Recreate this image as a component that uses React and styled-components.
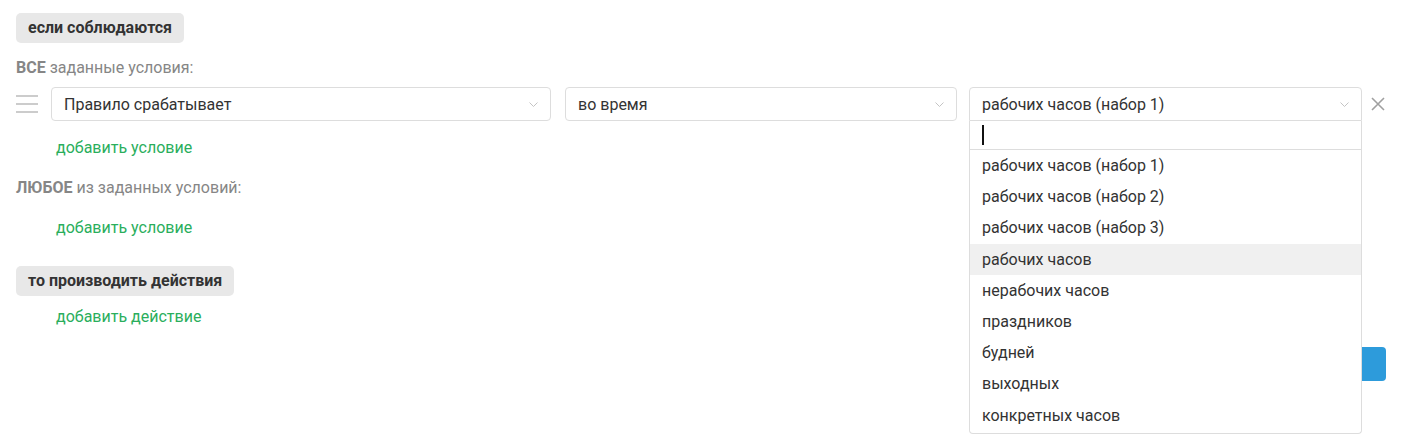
import styled, { createGlobalStyle } from 'styled-components'

const GlobalStyle = createGlobalStyle`
  html, body {
    margin: 0;
    min-height: 100%;
    background: #ffffff;
    font-family: Roboto, "Noto Sans", Arial, sans-serif;
  }
`

const Container = styled.div`
  box-sizing: border-box;
  width: 1402px;
  min-height: 448px;
  padding: 13px 16px;
  display: flex;
  flex-direction: column;
  align-items: flex-start;
`

const Badge = styled.div`
  height: 30px;
  line-height: 30px;
  padding: 0 12px;
  border-radius: 5px;
  background: #e8e8e8;
  color: #333333;
  font-weight: 700;
  font-size: 16px;
  margin-top: ${(props) => props.top || 0}px;
`

const Label = styled.div`
  font-size: 16px;
  line-height: 20px;
  color: #868686;
  margin-top: ${(props) => props.top || 0}px;

  b {
    font-weight: 700;
  }
`

const AddLink = styled.a`
  display: block;
  font-size: 16px;
  line-height: 20px;
  color: #2aae5c;
  text-decoration: none;
  margin-left: 40px;
  margin-top: ${(props) => props.top || 0}px;
  cursor: pointer;
`

const ConditionRow = styled.div`
  display: flex;
  align-items: center;
  margin-top: 9px;
`

const Handle = styled.div`
  width: 22px;
  height: 18px;
  display: flex;
  flex-direction: column;
  justify-content: space-between;
  margin-right: 13px;

  span {
    height: 2px;
    background: #cccccc;
  }
`

const SelectWrap = styled.div`
  position: relative;
  width: ${(props) => props.width}px;
  margin-right: ${(props) => props.gap || 0}px;
`

const SelectBox = styled.div`
  box-sizing: border-box;
  height: 34px;
  display: flex;
  align-items: center;
  justify-content: space-between;
  padding: 0 12px;
  border: 1px solid #dddddd;
  border-radius: ${(props) => (props.open ? '4px 4px 0 0' : '4px')};
  font-size: 16px;
  color: #333333;
  background: #ffffff;
`

const Dropdown = styled.div`
  position: absolute;
  top: 100%;
  left: 0;
  right: 0;
  z-index: 10;
  background: #ffffff;
  border: 1px solid #dddddd;
  border-top: none;
  border-radius: 0 0 4px 4px;
  padding-bottom: 2px;
`

const Search = styled.div`
  height: 28px;
  display: flex;
  align-items: center;
  padding: 0 12px;
  border-bottom: 1px solid #dddddd;
`

const Caret = styled.span`
  width: 1.5px;
  height: 20px;
  background: #111111;
`

const Option = styled.div`
  height: 31.2px;
  line-height: 31px;
  padding: 0 12px;
  font-size: 16px;
  color: #333333;
  background: ${(props) => (props.active ? '#f0f0f0' : '#ffffff')};
`

const RemoveButton = styled.button`
  width: 15px;
  height: 15px;
  margin-left: 8px;
  padding: 0;
  border: none;
  background: none;
  display: flex;
  align-items: center;
  justify-content: center;
`

const Footer = styled.div`
  width: 100%;
  display: flex;
  justify-content: flex-end;
  margin-top: 20px;
`

const SaveButton = styled.button`
  height: 34px;
  padding: 0 28px;
  border: none;
  border-radius: 4px;
  background: #2d9bdb;
  color: #ffffff;
  font-family: inherit;
  font-size: 16px;
`

const Chevron = () => (
  <svg width='9' height='5' viewBox='0 0 9 5'>
    <polyline points='0.5,0.5 4.5,4.5 8.5,0.5' fill='none' stroke='#c4c4c4' strokeWidth='1' />
  </svg>
)

const Select = ({ value, width, gap, open, children }) => (
  <SelectWrap width={width} gap={gap}>
    <SelectBox open={open}>
      <span>{value}</span>
      <Chevron />
    </SelectBox>
    {open && children}
  </SelectWrap>
)

const periods = [
  'рабочих часов (набор 1)',
  'рабочих часов (набор 2)',
  'рабочих часов (набор 3)',
  'рабочих часов',
  'нерабочих часов',
  'праздников',
  'будней',
  'выходных',
  'конкретных часов',
]

const App = () => {
  return (
    <Container>
      <GlobalStyle />
      <Badge>если соблюдаются</Badge>
      <Label top={15}>
        <b>ВСЕ</b> заданные условия:
      </Label>
      <ConditionRow>
        <Handle>
          <span />
          <span />
          <span />
        </Handle>
        <Select value='Правило срабатывает' width={500} gap={14} />
        <Select value='во время' width={392} gap={12} />
        <Select value='рабочих часов (набор 1)' width={393} open>
          <Dropdown>
            <Search>
              <Caret />
            </Search>
            {periods.map((p, i) => (
              <Option key={p} active={i === 3}>
                {p}
              </Option>
            ))}
          </Dropdown>
        </Select>
        <RemoveButton>
          <svg width='14' height='14' viewBox='0 0 14 14'>
            <path d='M1 1L13 13M13 1L1 13' stroke='#a0a0a0' strokeWidth='1.6' />
          </svg>
        </RemoveButton>
      </ConditionRow>
      <AddLink top={17}>добавить условие</AddLink>
      <Label top={20}>
        <b>ЛЮБОЕ</b> из заданных условий:
      </Label>
      <AddLink top={20}>добавить условие</AddLink>
      <Badge top={28}>то производить действия</Badge>
      <AddLink top={11}>добавить действие</AddLink>
      <Footer>
        <SaveButton>Сохранить</SaveButton>
      </Footer>
    </Container>
  )
}

export default App
